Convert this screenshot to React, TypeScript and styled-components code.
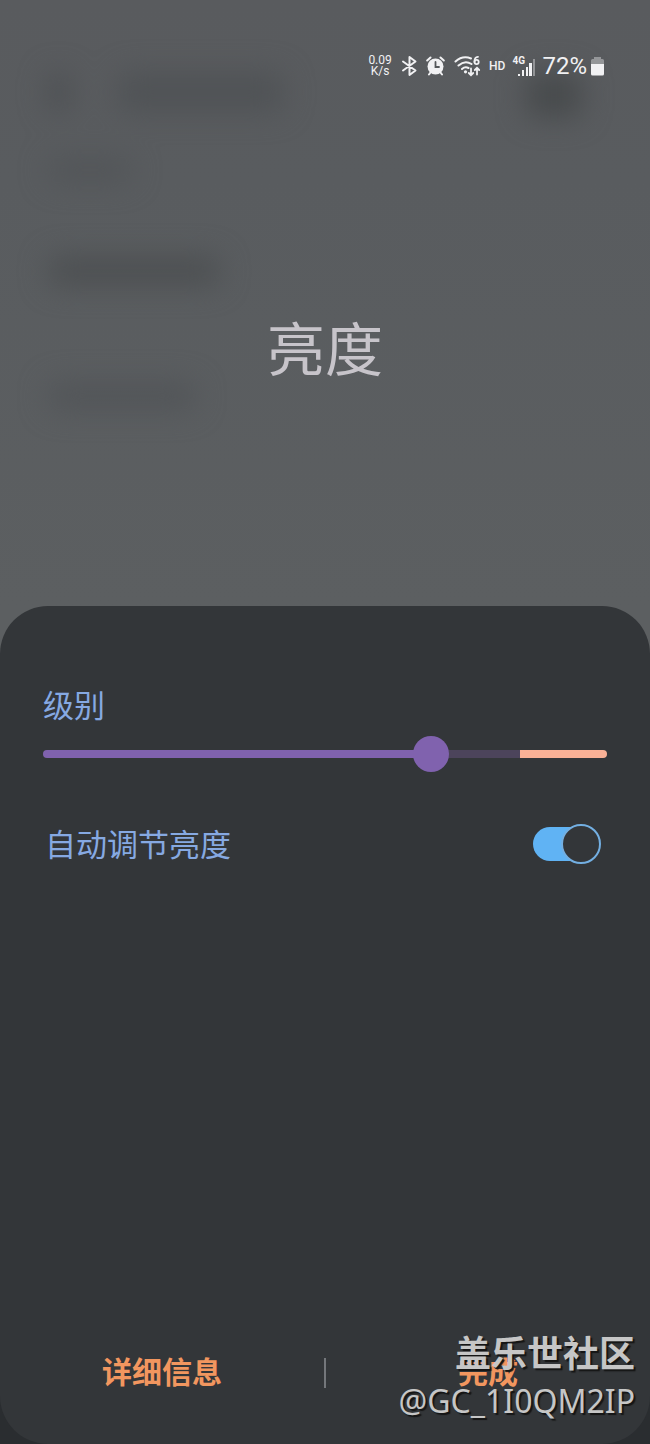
import React, { useState } from "react";
import styled, { createGlobalStyle } from "styled-components";

const GlobalStyle = createGlobalStyle`
  *, *::before, *::after { box-sizing: border-box; }
  body {
    margin: 0;
    background: #2a2d30;
    font-family: Roboto, "Noto Sans CJK SC", sans-serif;
  }
`;

const Screen = styled.main`
  position: relative;
  display: flex;
  flex-direction: column;
  min-height: 100vh;
  overflow: hidden;
`;

const Preview = styled.header`
  position: relative;
  background: linear-gradient(#595b5e, #595c5f 30%, #5c5f61);
`;

const Backdrop = styled.div`
  position: absolute;
  inset: 0;
  display: flex;
  flex-direction: column;
  padding: 72px 68px 0 48px;
  filter: blur(14px);
`;

const BackdropRow = styled.div<{ $gap: number }>`
  display: flex;
  gap: 48px;
  margin-bottom: ${(p) => p.$gap}px;
`;

const Smudge = styled.span<{ $width: number; $height: number; $color: string; $end?: boolean }>`
  width: ${(p) => p.$width}px;
  height: ${(p) => p.$height}px;
  border-radius: 12px;
  background: ${(p) => p.$color};
  margin-left: ${(p) => (p.$end ? "auto" : "0")};
`;

const StatusBar = styled.div`
  position: relative;
  display: flex;
  justify-content: flex-end;
  align-items: center;
  height: 32px;
  margin-top: 50px;
  padding-right: 46px;
  color: #f1f1f3;
`;

const Speed = styled.span`
  width: 24px;
  font-size: 12px;
  line-height: 11px;
  text-align: center;
  margin-right: 9px;
`;

const StatusIcon = styled.svg<{ $gap: number }>`
  flex: none;
  margin-right: ${(p) => p.$gap}px;
`;

const Hd = styled.span`
  font-size: 12px;
  line-height: 16px;
  font-weight: 500;
  margin-right: 7px;
`;

const Network = styled.span`
  display: flex;
  align-items: flex-end;
  height: 20px;
  width: 24px;
  margin-right: 6px;
`;

const NetworkType = styled.span`
  align-self: flex-start;
  width: 6px;
  font-size: 10px;
  line-height: 9px;
  font-weight: 700;
`;

const Percent = styled.span`
  font-size: 24px;
  line-height: 28px;
  margin-right: 4px;
`;

const Title = styled.h1`
  position: relative;
  margin: 0;
  padding: 225px 0 211px;
  font-size: 58px;
  line-height: 88px;
  font-weight: 400;
  text-align: center;
  color: #c7c4ca;
`;

const SheetArea = styled.div`
  flex: 1;
  display: flex;
  flex-direction: column;
  background: linear-gradient(#5c5f61 64px, #2a2d30 64px);
`;

const Sheet = styled.section`
  flex: 1;
  display: flex;
  flex-direction: column;
  padding: 79px 43px 0;
  border-radius: 48px;
  background: #333639;
`;

const Label = styled.label`
  font-size: 31px;
  line-height: 44px;
  color: #86a9e2;
`;

const Slider = styled.input.attrs<{ $value: number }>((p) => ({
  type: "range",
  style: { "--level": p.$value / 100 } as React.CSSProperties,
}))<{ $value: number }>`
  --fill: calc(18px + (100% - 36px) * var(--level));
  --boost: calc(100% - 87px);
  appearance: none;
  width: 100%;
  height: 36px;
  margin: 7px 0 0;
  background: none;

  &::-webkit-slider-runnable-track {
    height: 8px;
    border-radius: 4px;
    background: linear-gradient(
      to right,
      #8062ae var(--fill),
      #4c445b var(--fill),
      #4c445b var(--boost),
      #f9b196 var(--boost)
    );
  }

  &::-webkit-slider-thumb {
    appearance: none;
    width: 36px;
    height: 36px;
    margin-top: -14px;
    border-radius: 50%;
    background: #8062ae;
  }
`;

const SettingRow = styled.div`
  display: flex;
  justify-content: space-between;
  align-items: flex-start;
  margin-top: 52px;
  padding: 0 6px 0 2px;
`;

const Toggle = styled.input.attrs({ type: "checkbox", role: "switch" })`
  appearance: none;
  display: flex;
  align-items: center;
  width: 68px;
  height: 40px;
  margin: 0;

  &::before {
    content: "";
    width: 60px;
    height: 34px;
    border-radius: 17px;
    background: #777b80;
  }

  &::after {
    content: "";
    width: 40px;
    height: 40px;
    margin-left: -60px;
    border: 2px solid #777b80;
    border-radius: 50%;
    background: #333639;
  }

  &:checked::before { background: #60b3f4; }
  &:checked::after { margin-left: -32px; border-color: #73afe2; }
`;

const Actions = styled.footer`
  display: flex;
  align-items: center;
  margin: auto -43px 0;
  padding-bottom: 48px;
`;

const Action = styled.button`
  flex: 1;
  padding: 0;
  border: 0;
  background: none;
  font-family: inherit;
  font-size: 30px;
  line-height: 46px;
  font-weight: 700;
  color: #f2965f;
`;

const Divider = styled.span`
  width: 2px;
  height: 30px;
  background: #74777b;
`;

const Watermark = styled.div`
  position: absolute;
  right: 15px;
  bottom: 21px;
  display: flex;
  flex-direction: column;
  align-items: flex-end;
  color: #c6c6c6;
  text-shadow: 2px 2px 1px #151515;
  pointer-events: none;
`;

const Community = styled.span`
  font-size: 36px;
  line-height: 48px;
  font-weight: 700;
`;

const Author = styled.span`
  font-family: "Noto Sans", sans-serif;
  font-size: 32px;
  line-height: 44px;
`;

export default function App() {
  const [level, setLevel] = useState(70);
  const [auto, setAuto] = useState(true);

  return (
    <Screen>
      <GlobalStyle />
      <Preview>
        <Backdrop aria-hidden="true">
          <BackdropRow $gap={40}>
            <Smudge $width={22} $height={40} $color="#4d5053" />
            <Smudge $width={166} $height={40} $color="#505356" />
            <Smudge $width={56} $height={46} $color="#484b4d" $end />
          </BackdropRow>
          <BackdropRow $gap={74}>
            <Smudge $width={84} $height={24} $color="#525558" />
          </BackdropRow>
          <BackdropRow $gap={96}>
            <Smudge $width={172} $height={30} $color="#4d5052" />
          </BackdropRow>
          <BackdropRow $gap={0}>
            <Smudge $width={148} $height={28} $color="#525558" />
          </BackdropRow>
        </Backdrop>
        <StatusBar>
          <Speed>0.09 K/s</Speed>
          <StatusIcon $gap={8} width="17" height="22" viewBox="0 0 17 22" fill="none" stroke="currentColor" strokeWidth="2" strokeLinejoin="round" strokeLinecap="round" aria-label="Bluetooth">
            <path d="M2 6.500L14.500 15.500 8.500 20V2L14.500 6.500 2 15.500" />
          </StatusIcon>
          <StatusIcon $gap={9} width="19" height="20" viewBox="0 0 19 20" fill="none" stroke="currentColor" strokeLinecap="round" aria-label="Alarm">
            <circle cx="9.500" cy="10.500" r="8" fill="currentColor" stroke="none" />
            <path d="M1.200 4.500L4.500 1.500M17.800 4.500L14.500 1.500M4.500 16.500L3 18.500M14.500 16.500L16 18.500" strokeWidth="2" />
            <path d="M9.500 6v5H13" stroke="#55585b" strokeWidth="1.800" />
          </StatusIcon>
          <StatusIcon $gap={8} width="27" height="22" viewBox="0 0 27 22" fill="none" stroke="currentColor" strokeWidth="2" strokeLinecap="round" aria-label="Wi-Fi 6">
            <path d="M1.500 6.500C6 2.500 12 1.500 17 3.500M4.500 10.500c4-3.500 9-4 13-1.500M8 14c2-1.800 4.500-2 6.500-1" />
            <circle cx="11.500" cy="16.800" r="1.600" fill="currentColor" stroke="none" />
            <path d="M24 1.800C21.500 1.800 20.300 4 20.500 7" strokeWidth="1.800" />
            <circle cx="22.600" cy="7" r="2.100" strokeWidth="1.800" />
            <path d="M17 13.500v6.500M14.800 18l2.200 2.200 2.200-2.200M23 19.500v-6.500M20.800 15l2.200-2.200 2.200 2.200" strokeWidth="1.800" />
          </StatusIcon>
          <Hd>HD</Hd>
          <Network>
            <NetworkType>4G</NetworkType>
            <svg width="18" height="18" viewBox="0 0 18 18" fill="currentColor" aria-label="Signal">
              <rect x="0" y="16" width="2" height="2" />
              <rect x="4" y="12" width="2" height="6" />
              <rect x="8" y="9" width="2" height="9" />
              <rect x="11" y="5" width="3" height="13" />
              <rect x="15" y="1" width="2" height="17" opacity="0.400" />
            </svg>
          </Network>
          <Percent>72%</Percent>
          <StatusIcon $gap={0} width="13" height="20" viewBox="0 0 13 20" fill="currentColor" aria-label="Battery">
            <path d="M3 1h7v2h1.500A1.500 1.500 0 0 1 13 4.500V8H0V4.500A1.500 1.500 0 0 1 1.500 3H3z" opacity="0.400" />
            <path d="M0 8h13v10a1.500 1.500 0 0 1-1.500 1.500h-10A1.500 1.500 0 0 1 0 18z" />
          </StatusIcon>
        </StatusBar>
        <Title>亮度</Title>
      </Preview>
      <SheetArea>
        <Sheet>
          <Label htmlFor="level">级别</Label>
          <Slider
            id="level"
            min={0}
            max={100}
            value={level}
            $value={level}
            onChange={(e) => setLevel(Number(e.target.value))}
          />
          <SettingRow>
            <Label htmlFor="auto">自动调节亮度</Label>
            <Toggle id="auto" checked={auto} onChange={(e) => setAuto(e.target.checked)} />
          </SettingRow>
          <Actions>
            <Action type="button">详细信息</Action>
            <Divider />
            <Action type="button">完成</Action>
          </Actions>
        </Sheet>
      </SheetArea>
      <Watermark>
        <Community>盖乐世社区</Community>
        <Author>@GC_1I0QM2IP</Author>
      </Watermark>
    </Screen>
  );
}
